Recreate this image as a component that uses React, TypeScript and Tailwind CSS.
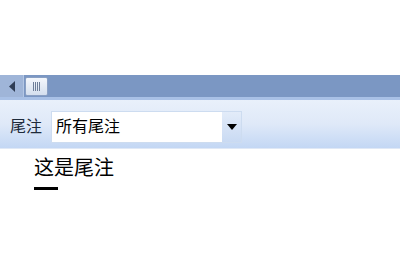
import React from "react";

const font = { fontFamily: '"Liberation Sans", "Noto Sans CJK SC", sans-serif' };

function ScrollBar() {
  return (
    <div className="h-[25px] mt-[75px] bg-[#7b97c3] flex items-center border-b-[3px] border-[#a9c1e6]">
      <div className="w-[24px] h-full flex items-center justify-center bg-[#9fb5d8] border-r border-[#b4c7e4]">
        <svg width="6" height="11" viewBox="0 0 6 11">
          <path d="M6 0 L0 5.5 L6 11 Z" fill="#2f3d55" />
        </svg>
      </div>
      <div className="w-[23px] h-[19px] ml-[1px] rounded-[2px] border border-[#8aa0c4] bg-gradient-to-b from-[#f4f7fc] to-[#d4dfee] flex items-center justify-center gap-[1px]">
        {[0, 1, 2, 3].map((i) => (
          <div key={i} className="w-[1px] h-[9px] bg-[#6e7e98]" />
        ))}
      </div>
    </div>
  );
}

function Toolbar() {
  return (
    <div className="h-[49px] bg-gradient-to-b from-[#e9f0fb] via-[#dfe9f8] to-[#c3d7f4] border-b border-[#dfe8f6] flex items-start pt-[11px] pl-[10px]" style={font}>
      <span className="text-[16px] leading-[32px] text-[#1e2a3a] mr-[9px]">尾注</span>
      <div className="w-[191px] h-[32px] bg-white border border-[#cddcf0] flex items-center">
        <span className="flex-1 pl-[4px] text-[16px] text-black">所有尾注</span>
        <div className="w-[19px] h-full bg-gradient-to-b from-[#e3ecf9] to-[#c9daf3] flex items-center justify-center">
          <svg width="10" height="6" viewBox="0 0 10 6">
            <path d="M0 0 L10 0 L5 6 Z" fill="#000" />
          </svg>
        </div>
      </div>
    </div>
  );
}

export default function App() {
  return (
    <div className="w-[400px] h-[266px] bg-white overflow-hidden">
      <ScrollBar />
      <Toolbar />
      <div className="pl-[34px] pt-[7px]" style={font}>
        <div className="text-[20px] leading-[24px] text-black">这是尾注</div>
        <div className="w-[24px] h-[3px] bg-black mt-[7px]" />
      </div>
    </div>
  );
}
